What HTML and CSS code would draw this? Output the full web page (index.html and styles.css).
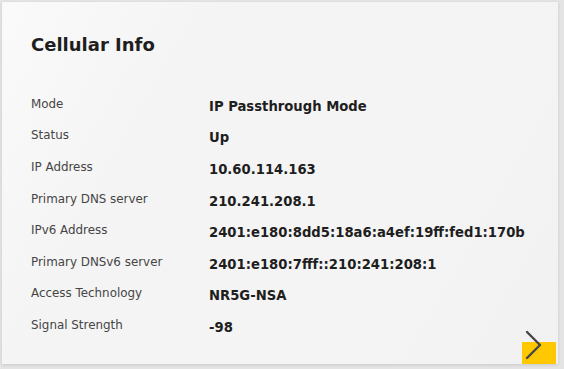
FILE: index.html
```html
<!DOCTYPE html>
<html lang="en">
<head>
    <meta charset="UTF-8">
    <title>Cellular Info</title>
    <link rel="stylesheet" href="styles.css">
</head>
<body>
    <div class="tarjeta">
        <h2 class="titulo">Cellular Info</h2>
        <div class="tabla">
            <div class="etiqueta">Mode</div><div class="valor">IP Passthrough Mode</div>
            <div class="etiqueta">Status</div><div class="valor">Up</div>
            <div class="etiqueta">IP Address</div><div class="valor">10.60.114.163</div>
            <div class="etiqueta">Primary DNS server</div><div class="valor">210.241.208.1</div>
            <div class="etiqueta">IPv6 Address</div><div class="valor">2401:e180:8dd5:18a6:a4ef:19ff:fed1:170b</div>
            <div class="etiqueta">Primary DNSv6 server</div><div class="valor">2401:e180:7fff::210:241:208:1</div>
            <div class="etiqueta">Access Technology</div><div class="valor">NR5G-NSA</div>
            <div class="etiqueta">Signal Strength</div><div class="valor">-98</div>
        </div>
        <button class="boton-mas">
            <svg width="20" height="32" viewBox="0 0 20 32">
                <path d="M4 3 L17 16 L4 29" fill="none" stroke="#474747" stroke-width="2.4" stroke-linecap="round" stroke-linejoin="round"/>
            </svg>
        </button>
    </div>
</body>
</html>
```

FILE: styles.css
```css
body {
    margin: 0;
    padding: 2px 6px 5px 2px;
    background-color: #e4e4e4;
    font-family: "DejaVu Sans", sans-serif;
    color: #222;
}

.tarjeta {
    position: relative;
    height: 362px;
    box-sizing: border-box;
    background: linear-gradient(120deg, #fafafa 0%, #f4f4f4 30%, #f4f4f4 70%, #f1f1f1 100%);
    box-shadow: 0 1px 3px rgba(0, 0, 0, 0.12);
    padding: 31px 20px 0 29px;
}

.titulo {
    margin: 0 0 32px 0;
    font-size: 18px;
    font-weight: bold;
    color: #1e1e1e;
    line-height: 24px;
}

.tabla {
    display: grid;
    grid-template-columns: 178px 1fr;
    grid-auto-rows: 31.6px;
    align-items: center;
}

.etiqueta {
    font-size: 11.9px;
    color: #454545;
    line-height: 19px;
    padding-bottom: 1px;
}

.valor {
    font-size: 13.2px;
    font-weight: bold;
    color: #1e1e1e;
    line-height: 19px;
    padding-top: 3px;
}

.boton-mas {
    position: absolute;
    right: 2px;
    bottom: 0;
    width: 34px;
    height: 22px;
    background-color: #ffc800;
    border: none;
    padding: 0;
    cursor: pointer;
}

.boton-mas svg {
    position: absolute;
    left: 1px;
    bottom: 3px;
}
```
